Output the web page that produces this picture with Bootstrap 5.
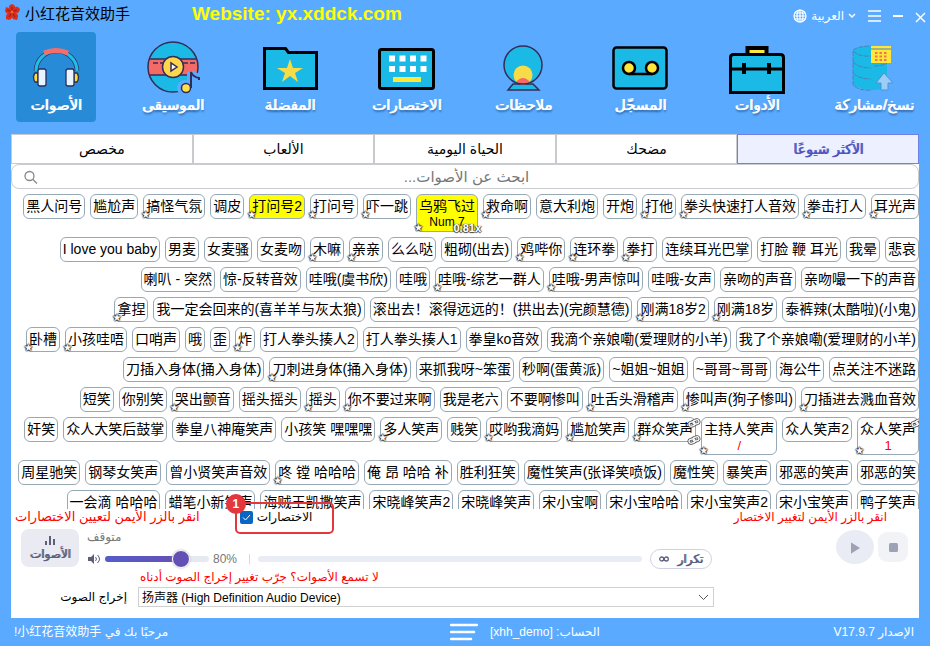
<!DOCTYPE html>
<html lang="ar">
<head>
<meta charset="utf-8">
<meta name="viewport" content="width=device-width, initial-scale=1">
<title>小红花音效助手</title>
<link href="https://cdn.jsdelivr.net/npm/bootstrap@5.3.0/dist/css/bootstrap.min.css" rel="stylesheet">
<style>
body{font-family:"Liberation Sans","DejaVu Sans","Noto Sans CJK SC",sans-serif;background:#5aabff;color:#000;font-size:14px;line-height:20px}
button,input,select{font-family:inherit}
.app-title{font-size:15px}
.flower{margin:4px 4px 0 4px}
.site-link{font-size:19px;color:#ff0;margin-left:62px}
.win-btn{color:#fff;line-height:16px;font-size:12px}
.win-tools{padding:8px 3px 0 0}
.title-bar{height:32px}
.heavy{font-weight:400;text-shadow:1px 0 currentColor}
.nav-tile{width:80px;height:90px;border:0;border-radius:4px;background:none;color:#fff;font-size:15px;white-space:nowrap;padding:6px 0 0;text-shadow:1px 0 currentColor,1px 2px 2px rgba(20,50,100,.6)}
.nav-tile svg{width:60px;height:58px}
.nav-tile span{line-height:18px}
.nav-tile.chosen{background:#288bd8;text-shadow:1px 0 currentColor}
.panel-body{margin:12px 11px 0;background:#fff}
.tab-btn{height:30px;border:1px solid #c8cacd;background:#fff;font-size:14px;padding:0}
.tab-btn.chosen{border-color:#6f80e6;background:#edf0ff;color:#4d55c0}
.search-wrap{border:1px solid #c9ccd1;border-radius:8px;height:25px;padding:0 11px}
.search-wrap input{font-size:15px;outline:0;margin-right:12px}
.search-wrap input::placeholder{color:#777}
.chips{direction:rtl;gap:5px;padding:5px 0 0 5px}
.chip{position:relative;direction:ltr;background:#fff;border:1px solid #96a9b5;border-radius:6px;padding:1px 2px 2px;line-height:20px;white-space:nowrap;color:#000;font-size:14px}
.chip.hot{background:#ff0}
.chip .key{display:block;font-size:12px;line-height:13px}
.chip.fav::after{content:"★";position:absolute;left:-3px;bottom:-3px;font:10px/13px "DejaVu Sans",sans-serif;color:#fff;text-shadow:1px 0 1px #333,-1px 0 1px #333,0 1px 1px #333,0 -1px 1px #333}
.rate{position:absolute;right:-4px;bottom:-5px;font-size:11px;line-height:16px;font-weight:700;color:#fff;text-shadow:1px 0 1px #444,-1px 0 1px #444,0 1px 1px #444}
.chain{position:absolute;right:-6px;width:14px;height:10px}
.chain.up{top:0}
.chain.down{bottom:-4px}
.red{color:#f00}
.chip .red{font-size:13px}
.hint{font-size:12px;line-height:16px}
.hint-lg{font-size:13px}
.dock{padding:0 0 11px}
.shortcut-box{position:relative;margin-left:40px}
.shortcut-box input{appearance:none;width:13px;height:13px;border-radius:2px;background:#0b65c2}
.shortcut-box .tick{position:absolute;left:2px;top:4px;pointer-events:none}
.mark-frame{position:absolute;left:-5px;top:-7px;width:99px;height:32px;border:2px solid #e4373d;border-radius:5px;pointer-events:none}
.mark-dot{position:absolute;left:-14px;top:-15px;width:20px;height:20px;border-radius:50%;background:#e4373d;color:#fff;font-weight:700;line-height:20px;text-align:center}
.sound-btn{width:58px;height:38px;border:0;border-radius:8px;background:#e9eaf2;color:#5b5f7c;font-size:12px;line-height:14px;padding:4px 0 0;margin:0 8px 0 10px}
.status{font-size:12px;line-height:16px;color:#777}
.vol{appearance:none;width:104px;height:6px;border-radius:3px;background:linear-gradient(90deg,#545dcb 0,#674eb3 74%,#e7e9f0 74%)}
.vol::-webkit-slider-thumb{appearance:none;width:18px;height:18px;border-radius:50%;background:#644fb5;border:1px solid #fff;box-shadow:0 0 2px #aaa}
.track{height:6px;border-radius:3px;background:#e9ecf4}
.rule{width:1px;height:10px;background:#d5d8df}
.repeat-btn{width:62px;height:20px;border:1px solid #cfd2e2;border-radius:10px;background:#fff;color:#5b5f7c;font-size:12px;line-height:16px;padding:0}
.round-btn{border:0;padding:0;background:#e9ecf4;width:38px;height:34px;border-radius:50%}
.stop-btn{border:0;padding:0;background:#f2f3f7;width:30px;height:30px;border-radius:9px}
.play-side{width:207px;padding:0 11px 4px 0}
.out-row{padding-top:2px}
.out-label{width:127px;font-size:12px;padding-right:11px}
.out-hint{margin-left:2px}
.out-select{width:576px;height:20px;appearance:none;border:1px solid #d0d0d0;background:#fff;font-size:12px;padding:0 3px;color:#000}
.out-arrow{position:absolute;right:5px;top:6px}
.foot{color:#fff;font-size:12px;height:28px;padding:0 16px 0 14px}
</style>
<script src="https://cdn.jsdelivr.net/npm/bootstrap@5.3.0/dist/js/bootstrap.bundle.min.js"></script>
</head>
<body class="vh-100 d-flex flex-column overflow-hidden">
<svg width="0" height="0" class="position-absolute"><symbol id="chain" viewBox="0 0 14 10"><g fill="none" stroke="#555" stroke-width="3"><rect x="2" y="4" width="6" height="4" rx="2" transform="rotate(-15 5 6)"/><rect x="6" y="2" width="6" height="4" rx="2" transform="rotate(-15 9 4)"/></g><g fill="none" stroke="#fff" stroke-width="1.3"><rect x="2" y="4" width="6" height="4" rx="2" transform="rotate(-15 5 6)"/><rect x="6" y="2" width="6" height="4" rx="2" transform="rotate(-15 9 4)"/></g></symbol></svg>

<header class="title-bar d-flex align-items-start flex-shrink-0">
  <svg class="flower" width="17" height="17" viewBox="0 0 17 17"><g fill="#d82f1c"><path d="M8 8Q3 3 6 1l2-1 2 1q3 2-2 7z"/><path d="M8 8q2-6 6-5l2 2-1 3q-4 3-7 0z"/><path d="M8 8q7 1 6 5l-1 3-4-1q-3-3-1-7z"/><path d="M8 8q1 7-3 8l-3-1v-3q2-5 6-4z"/><path d="M8 8Q2 11 1 7l1-4 3 1q3 1 3 4z"/></g><path d="M8 8V3M8 8l5-2M8 8l3 5M8 8l-3 5M8 8L3 6" stroke="#9e1710"/><circle cx="8" cy="8" r="1.500" fill="#f4662f"/></svg>
  <span class="app-title pt-1">小红花音效助手</span>
  <strong class="site-link pt-1">Website: yx.xddck.com</strong>
  <div class="win-tools ms-auto d-flex align-items-center">
    <button class="win-btn btn p-0 border-0 d-flex align-items-center gap-1"><svg width="14" height="14" viewBox="0 0 14 14" fill="none" stroke="#fff" stroke-width="1.200"><circle cx="7" cy="7" r="6"/><ellipse cx="7" cy="7" rx="3" ry="6"/><path d="M7 1v12M1 7h12M2 4h10M2 10h10"/></svg><span>العربية</span><svg width="8" height="6" viewBox="0 0 8 6" fill="none" stroke="#fff" stroke-width="1.500"><path d="M1 1l3 3 3-3"/></svg></button>
    <button class="btn p-0 border-0 ms-2 ps-1 d-flex" aria-label="القائمة"><svg width="13" height="14" viewBox="0 0 13 14" stroke="#fff" stroke-width="1.500"><path d="M0 2h13M0 7h13M0 12h13"/></svg></button>
    <button class="btn p-0 border-0 ms-2 ps-1 d-flex" aria-label="تصغير"><svg width="10" height="14" viewBox="0 0 10 14" stroke="#fff" stroke-width="2"><path d="M0 7h10"/></svg></button>
    <button class="btn p-0 border-0 ms-2 ps-1 d-flex" aria-label="إغلاق"><svg width="12" height="14" viewBox="0 0 12 14" stroke="#fff" stroke-width="1.500"><path d="M1 4l9 9M10 4l-9 9"/></svg></button>
  </div>
</header>

<nav class="d-flex justify-content-between px-3 flex-shrink-0">
  <button class="nav-tile chosen d-flex flex-column align-items-center"><svg viewBox="0 0 60 58"><path d="M10 33a20.500 20 0 0 1 41 0" fill="none" stroke="#2a3568" stroke-width="4.500"/><path d="M10 33a20.500 20 0 0 1 41 0" fill="none" stroke="#1fc0e6" stroke-width="3"/><path d="M18 15q12-5 24 0" fill="none" stroke="#f56f6a" stroke-width="5"/><g stroke="#2a2d5c" stroke-width="1.300"><path d="M12 35H9q-3 4 0 9h3zM48 35h3q3 4 0 9h-3z" fill="#f9dc3e"/><rect x="12" y="31" width="8" height="17" rx="2" fill="#e8f4ff"/><rect x="40" y="31" width="8" height="17" rx="2" fill="#e8f4ff"/></g></svg><span>الأصوات</span></button>
  <button class="nav-tile d-flex flex-column align-items-center"><svg viewBox="0 0 60 58"><circle cx="30" cy="29" r="25" fill="#1bb9e5"/><path d="M5 21h50v16H5z" fill="#f46b66"/><g fill="none" stroke="#342c58" stroke-width="1.500"><circle cx="30" cy="29" r="25"/><path d="M6 21h48M6 37h48"/><path d="M10 25h10M40 25h12" stroke-dasharray="5 2"/></g><circle cx="30" cy="29" r="10.500" fill="#ffd64b" stroke="#342c58" stroke-width="1.500"/><path d="M28 25v8l6-4z" fill="#fff" stroke="#342c58" stroke-width="1.500"/><circle cx="42" cy="50" r="8" fill="#5aabff"/><path d="M48 34v14m0-14q2 5 9 6" fill="none" stroke="#5aabff" stroke-width="8"/><circle cx="43" cy="50" r="4.500" fill="#ffe247" stroke="#342c58" stroke-width="1.500"/><path d="M48 50V34q2 5 8 6v2" fill="none" stroke="#342c58" stroke-width="2"/></svg><span>الموسيقى</span></button>
  <button class="nav-tile d-flex flex-column align-items-center"><svg viewBox="0 0 60 58"><path d="M4.500 10.500h21l3 4h28v36h-52z" fill="#1bb9e5" stroke="#000" stroke-width="3"/><path d="M30 21l3 9h10l-8 5 3 9-8-6-8 6 3-9-8-5h10z" fill="#f7dc47"/></svg><span>المفضلة</span></button>
  <button class="nav-tile d-flex flex-column align-items-center"><svg viewBox="0 0 60 58"><rect x="2.500" y="11.500" width="54" height="39" rx="2" fill="#1bb9e5" stroke="#000" stroke-width="3"/><path d="M12 20.500h38M12 31h38" stroke="#fff" stroke-width="6" stroke-dasharray="6 4.500"/><path d="M16 39h28v5H16z" fill="#ffe63b"/></svg><span>الاختصارات</span></button>
  <button class="nav-tile d-flex flex-column align-items-center"><svg viewBox="0 0 60 58"><circle cx="30" cy="27" r="18.500" fill="#1bb9e5"/><path d="M20 46L15 52h31l-6-6z" fill="#1bb9e5" stroke="#342c58" stroke-width="1.500"/><circle cx="30" cy="37" r="9.500" fill="#f7dc47"/><path d="M23 44q7-8 14 0-7 6-14 0z" fill="#f46b66"/><circle cx="30" cy="27" r="19" fill="none" stroke="#342c58" stroke-width="1.500"/></svg><span>ملاحظات</span></button>
  <button class="nav-tile d-flex flex-column align-items-center"><svg viewBox="0 0 60 58"><rect x="3.500" y="9.500" width="53" height="41" rx="3" fill="#1bb9e5" stroke="#000" stroke-width="2.500"/><g fill="#ffe63b" stroke="#000" stroke-width="2.500"><circle cx="19" cy="30" r="6"/><circle cx="42" cy="30" r="6"/></g><path d="M19 36h23" stroke="#000" stroke-width="2.500"/></svg><span>المسجّل</span></button>
  <button class="nav-tile d-flex flex-column align-items-center"><svg viewBox="0 0 60 58"><path d="M20.500 16V10h19v6" fill="#ffe63b" stroke="#000" stroke-width="4"/><path d="M3.500 54.500v-35q0-3 3-3h47q3 0 3 3v35z" fill="#1bb9e5" stroke="#000" stroke-width="3"/><path d="M3 31h54" stroke="#000" stroke-width="3"/><path d="M17 25v11M42 25v11" stroke="#000" stroke-width="4"/></svg><span>الأدوات</span></button>
  <button class="nav-tile d-flex flex-column align-items-center"><svg viewBox="0 0 60 58"><path d="M9 13q4-5 18-5h16v42q-20 5-34-3z" fill="#1bb9e5"/><path d="M9 13q6 6 18 5M9 24q6 6 18 6M9 35q6 6 18 6M9 13v34q6 6 18 5M9 12q6-4 18-4M30 28q10 0 14-4" fill="none" stroke="#4586b9" stroke-dasharray="5 1"/><path d="M27 8h20v17H27z" fill="#ffe63b"/><path d="M27 11h20" stroke="#4586b9"/><path d="M31 15h13M31 18.500h13M31 22h13" stroke="#f2755b" stroke-width="2" stroke-dasharray="2.500 2"/><path d="M40 35l9 10h-5v7h-7v-7h-5z" fill="#9ccdf7" stroke="#4a95d8"/></svg><span>نسخ/مشاركة</span></button>
</nav>

<main class="panel-body d-flex flex-column flex-grow-1 overflow-hidden">
  <div class="d-flex flex-shrink-0" role="tablist">
    <button class="tab-btn flex-fill w-25" role="tab">مخصص</button><button class="tab-btn flex-fill w-25" role="tab">الألعاب</button><button class="tab-btn flex-fill w-25" role="tab">الحياة اليومية</button><button class="tab-btn flex-fill w-25" role="tab">مضحك</button><button class="tab-btn chosen heavy flex-fill w-25" role="tab">الأكثر شيوعًا</button>
  </div>
  <div class="search-wrap d-flex align-items-center flex-shrink-0">
    <svg width="15" height="14" viewBox="0 0 15 14" fill="none" stroke="#888" stroke-width="1.300"><circle cx="6.500" cy="6" r="4.500"/><path d="M10 9.500l4 4"/></svg>
    <input class="flex-grow-1 border-0 bg-transparent text-center p-0" dir="rtl" type="text" aria-label="بحث" placeholder="ابحث عن الأصوات...">
  </div>

  <section class="chips d-flex flex-wrap align-items-start align-content-start flex-grow-1 overflow-hidden">
    <button class="chip fav">耳光声</button><button class="chip fav">拳击打人</button><button class="chip fav">拳头快速打人音效</button><button class="chip fav">打他</button><button class="chip">开炮</button><button class="chip">意大利炮</button><button class="chip fav">救命啊</button><button class="chip hot fav">乌鸦飞过<span class="key">Num 7</span><span class="rate">0.81x</span></button><button class="chip fav">吓一跳</button><button class="chip fav">打问号</button><button class="chip hot fav">打问号2</button><button class="chip">调皮</button><button class="chip fav">搞怪气氛</button><button class="chip">尴尬声</button><button class="chip">黑人问号</button>
    <button class="chip">悲哀</button><button class="chip">我晕</button><button class="chip">打脸 鞭 耳光</button><button class="chip">连续耳光巴掌</button><button class="chip fav">拳打</button><button class="chip fav">连环拳</button><button class="chip fav">鸡哔你</button><button class="chip">粗砌(出去)</button><button class="chip">么么哒</button><button class="chip fav">亲亲</button><button class="chip fav">木嘛</button><button class="chip">女麦吻</button><button class="chip">女麦骚</button><button class="chip">男麦</button><button class="chip">I love you baby</button>
    <button class="chip">亲吻嘬一下的声音</button><button class="chip">亲吻的声音</button><button class="chip">哇哦-女声</button><button class="chip fav">哇哦-男声惊叫</button><button class="chip fav">哇哦-综艺一群人</button><button class="chip">哇哦</button><button class="chip">哇哦(虞书欣)</button><button class="chip">惊-反转音效</button><button class="chip">喇叭 - 突然</button>
    <button class="chip">泰裤辣(太酷啦)(小鬼)</button><button class="chip fav">刚满18岁</button><button class="chip fav">刚满18岁2</button><button class="chip">滚出去！滚得远远的！(拱出去)(完颜慧德)</button><button class="chip">我一定会回来的(喜羊羊与灰太狼)</button><button class="chip fav">拿捏</button>
    <button class="chip">我了个亲娘嘞(爱理财的小羊)</button><button class="chip">我滴个亲娘嘞(爱理财的小羊)</button><button class="chip">拳皇ko音效</button><button class="chip">打人拳头揍人1</button><button class="chip">打人拳头揍人2</button><button class="chip fav">炸</button><button class="chip">歪</button><button class="chip">哦</button><button class="chip">口哨声</button><button class="chip fav">小孩哇唔</button><button class="chip fav">卧槽</button>
    <button class="chip">点关注不迷路</button><button class="chip">海公牛</button><button class="chip">~哥哥~哥哥</button><button class="chip">~姐姐~姐姐</button><button class="chip">秒啊(蛋黄派)</button><button class="chip">来抓我呀~笨蛋</button><button class="chip fav">刀刺进身体(捅入身体)</button><button class="chip">刀插入身体(捅入身体)</button>
    <button class="chip fav">刀插进去溅血音效</button><button class="chip fav">惨叫声(狗子惨叫)</button><button class="chip fav">吐舌头滑稽声</button><button class="chip">不要啊惨叫</button><button class="chip">我是老六</button><button class="chip fav">你不要过来啊</button><button class="chip fav">摇头</button><button class="chip">摇头摇头</button><button class="chip fav">哭出颤音</button><button class="chip">你别笑</button><button class="chip">短笑</button>
    <button class="chip fav">众人笑声<span class="key red">1</span><svg class="chain up"><use href="#chain"/></svg></button><button class="chip">众人笑声2</button><button class="chip fav">主持人笑声<span class="key red">/</span></button><button class="chip fav">群众笑声<svg class="chain up"><use href="#chain"/></svg><svg class="chain down"><use href="#chain"/></svg></button><button class="chip fav">尴尬笑声</button><button class="chip fav">哎哟我滴妈</button><button class="chip">贱笑</button><button class="chip fav">多人笑声</button><button class="chip">小孩笑 嘿嘿嘿</button><button class="chip">拳皇八神庵笑声</button><button class="chip">众人大笑后鼓掌</button><button class="chip">奸笑</button>
    <button class="chip">邪恶的笑</button><button class="chip">邪恶的笑声</button><button class="chip">暴笑声</button><button class="chip">魔性笑</button><button class="chip">魔性笑声(张译笑喷饭)</button><button class="chip">胜利狂笑</button><button class="chip">俺 昂 哈哈 补</button><button class="chip fav">咚 镗 哈哈哈</button><button class="chip">曾小贤笑声音效</button><button class="chip">钢琴女笑声</button><button class="chip">周星驰笑</button>
    <button class="chip">鸭子笑声</button><button class="chip">宋小宝笑声</button><button class="chip">宋小宝笑声2</button><button class="chip">宋小宝哈哈</button><button class="chip">宋小宝啊</button><button class="chip">宋晓峰笑声</button><button class="chip">宋晓峰笑声2</button><button class="chip">海贼王凯撒笑声</button><button class="chip">蜡笔小新笑声</button><button class="chip">一会滴 哈哈哈</button>
  </section>

  <section class="dock flex-shrink-0">
    <div class="d-flex hint ps-1">
      <span class="red hint-lg">انقر بالزر الأيمن لتعيين الاختصارات</span>
      <div class="shortcut-box d-flex align-items-center gap-1"><input id="keys" type="checkbox" class="m-0" checked><svg class="tick" width="9" height="9" viewBox="0 0 9 9" fill="none" stroke="#fff"><path d="M1 4.500L3.500 7 8 2"/></svg><label for="keys">الاختصارات</label><span class="mark-frame"></span><span class="mark-dot">1</span></div>
      <span class="red ms-auto me-4 pe-2">انقر بالزر الأيمن لتغيير الاختصار</span>
    </div>
    <div class="d-flex pt-1">
      <button class="sound-btn heavy flex-shrink-0 d-flex flex-column align-items-center"><svg width="12" height="14" viewBox="0 0 12 14" stroke="#5b5f7c" stroke-width="2"><path d="M2 8v4M6 3v9M10 6v6"/></svg><span>الأصوات</span></button>
      <div class="flex-grow-1">
        <div class="status">متوقف</div>
        <div class="d-flex align-items-center gap-1 pt-1">
          <svg width="14" height="12" viewBox="0 0 14 12"><path d="M1 4h3l3-3v10L4 8H1z" fill="#5b5f7c"/><path d="M8.500 4q2 2 0 4M10.500 2q4 4 0 8" fill="none" stroke="#5b5f7c"/></svg>
          <input class="vol" type="range" value="78" aria-label="مستوى الصوت">
          <span class="status">80%</span>
          <span class="rule ms-2"></span>
          <div class="track flex-grow-1 mx-1" role="progressbar" aria-label="التقدم"></div>
          <button class="repeat-btn heavy d-flex align-items-center justify-content-center gap-2"><svg width="10" height="6" viewBox="0 0 10 6" fill="none" stroke="#5b5f7c" stroke-width="1.300"><circle cx="2.700" cy="3" r="2"/><circle cx="7.300" cy="3" r="2"/></svg><span>تكرار</span></button>
        </div>
      </div>
      <div class="play-side d-flex justify-content-end align-items-center gap-1 flex-shrink-0">
        <button class="round-btn" aria-label="تشغيل"><svg width="12" height="12" viewBox="0 0 12 12"><path d="M2 1q0-1 1 0l8 5-8 5q-1 1-1 0z" fill="#9da3b4"/></svg></button>
        <button class="stop-btn d-flex align-items-center justify-content-center" aria-label="إيقاف"><svg width="9" height="9" viewBox="0 0 9 9"><rect width="9" height="9" rx="1.500" fill="#9da3b4"/></svg></button>
      </div>
    </div>
    <div class="d-flex"><span class="out-label"></span><span class="hint out-hint red" dir="rtl">لا تسمع الأصوات؟ جرّب تغيير إخراج الصوت أدناه</span></div>
    <div class="out-row d-flex"><label class="out-label text-end" for="out">إخراج الصوت</label><div class="position-relative"><select id="out" class="out-select"><option>扬声器 (High Definition Audio Device)</option></select><svg class="out-arrow" width="11" height="8" viewBox="0 0 11 8" fill="none" stroke="#555"><path d="M1 2l4.500 4.500L10 2"/></svg></div></div>
  </section>
</main>

<footer class="foot d-flex align-items-center justify-content-between flex-shrink-0">
  <span dir="rtl">مرحبًا بك في 小红花音效助手!</span>
  <span class="d-flex align-items-center gap-2 ms-5"><svg class="me-1" width="28" height="18" viewBox="0 0 28 18" stroke="#fff" stroke-width="2.500" stroke-linecap="round"><path d="M1 2h26M1 9h23M1 16h20"/></svg><span dir="rtl">الحساب: [xhh_demo]</span></span>
  <span dir="rtl">الإصدار V17.9.7</span>
</footer>
</body>
</html>
